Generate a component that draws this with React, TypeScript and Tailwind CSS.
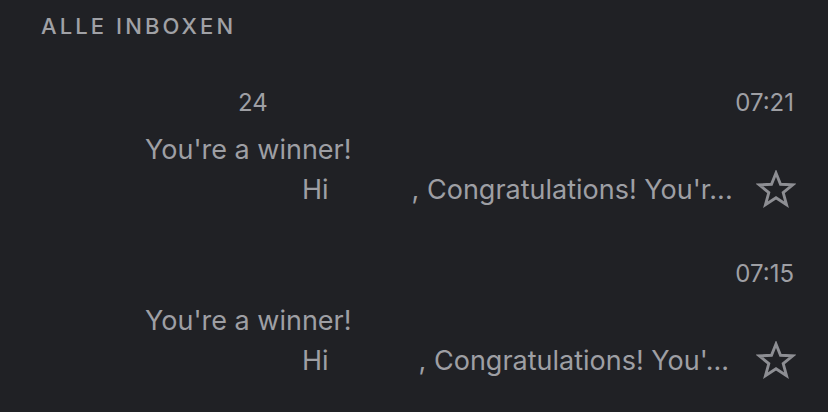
import React from "react";

type Mail = {
  count?: string;
  time: string;
  subject: string;
  preview: string;
  gap: string;
};

const mails: Mail[] = [
  {
    count: "24",
    time: "07:21",
    subject: "You're a winner!",
    preview: ", Congratulations! You'r...",
    gap: "w-[83px]",
  },
  {
    time: "07:15",
    subject: "You're a winner!",
    preview: ", Congratulations! You'...",
    gap: "w-[90px]",
  },
];

function StarIcon() {
  return (
    <svg width="40" height="40" viewBox="0 0 40 40" fill="none">
      <polygon
        points="20,3 24.5,14.3 36.8,14.8 27.2,22.6 30.5,34.6 20,27.7 9.5,34.6 12.8,22.6 3.2,14.8 15.5,14.3"
        stroke="#8d8e93"
        strokeWidth="2.9"
        strokeLinejoin="miter"
      />
    </svg>
  );
}

function MailRow({ mail }: { mail: Mail }) {
  return (
    <div className="flex flex-col">
      <div className="flex h-[28px] items-center justify-between pr-[34px] text-[24px] leading-[28px] text-[#9e9fa4]">
        <span className="pl-[238px]">{mail.count ?? ""}</span>
        <span>{mail.time}</span>
      </div>
      <div className="mt-[17px] h-[32px] pl-[145px] text-[27px] leading-[32px] text-[#9e9fa4]">
        {mail.subject}
      </div>
      <div className="mt-[4px] flex h-[40px] items-center justify-between pr-[32px]">
        <div className="flex pl-[302px] text-[27px] leading-[40px] text-[#9e9fa4]">
          <span>Hi</span>
          <span className={mail.gap} />
          <span>{mail.preview}</span>
        </div>
        <StarIcon />
      </div>
    </div>
  );
}

export default function App() {
  return (
    <div
      className="h-[412px] w-[828px] overflow-hidden bg-[#202125]"
      style={{ fontFamily: "Inter, 'Noto Sans', sans-serif" }}
    >
      <div className="mt-[12px] h-[28px] pl-[41px] text-[22px] font-medium leading-[28px] tracking-[3.1px] text-[#a0a1a6]">
        ALLE INBOXEN
      </div>
      <div className="mt-[49px] flex flex-col gap-[50px]">
        {mails.map((m, i) => (
          <MailRow key={i} mail={m} />
        ))}
      </div>
    </div>
  );
}
